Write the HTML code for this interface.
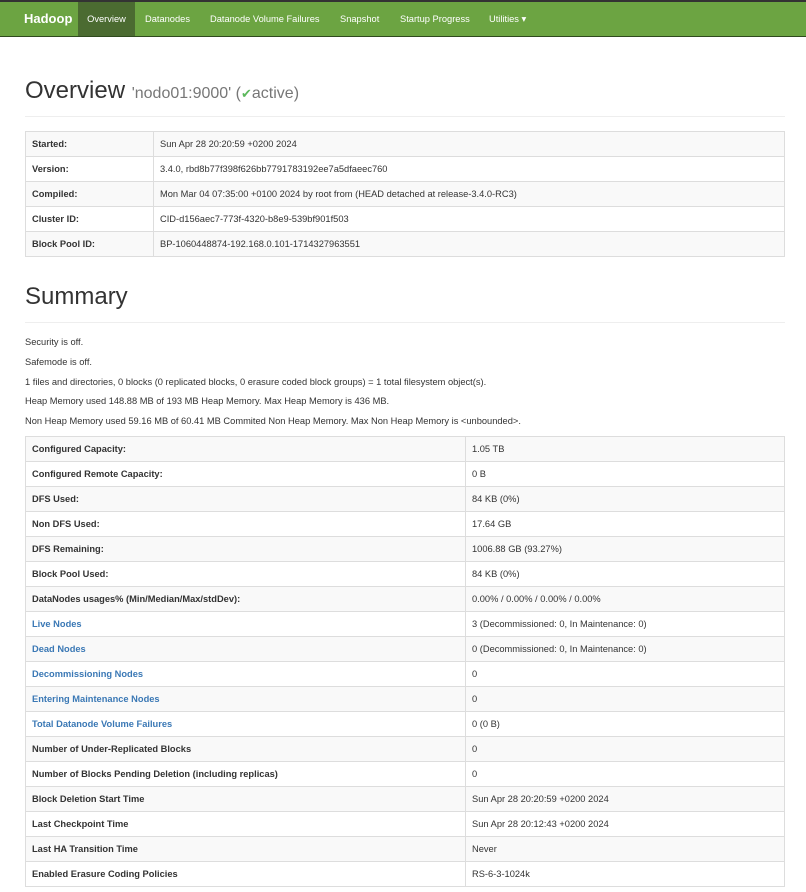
<!DOCTYPE html>
<html><head><meta charset="utf-8"><style>
*{box-sizing:border-box;margin:0;padding:0}
body{width:806px;height:892px;overflow:hidden;background:#fff;font-family:"Liberation Sans",Arial,sans-serif;font-size:9.3px;color:#333}
.nav{height:37px;background:#6ca442;border-top:2px solid #333;border-bottom:1px solid #2f4a1e;position:relative}
.nav span{position:absolute;top:0;height:34px;line-height:34px;color:#fff;font-size:9.3px}
.nav .brand{font-size:13px;left:24px}
.nav .act{background:#4b6b31;left:78px;width:57px;text-align:center}
h1{font-weight:normal;font-size:24px;color:#333;position:absolute;left:25px}
h1 small{font-size:16px;color:#777}
hr{position:absolute;left:25px;width:760px;border:0;border-top:1px solid #eee}
table{position:absolute;left:25px;width:760px;border-collapse:collapse}
td{border:1px solid #ddd;height:25px;padding:0 6px;font-size:9.3px;vertical-align:middle}
tr:nth-child(odd) td{background:#f9f9f9}
td.l{font-weight:bold}
td.a{color:#3a78b5;font-weight:bold}
.p{position:absolute;left:25px;font-size:9.3px}
</style></head><body>
<div class="nav">
<span class="brand" style="font-weight:bold">Hadoop</span>
<span class="act">Overview</span>
<span style="left:145px">Datanodes</span>
<span style="left:210px">Datanode Volume Failures</span>
<span style="left:340px">Snapshot</span>
<span style="left:400px">Startup Progress</span>
<span style="left:489px">Utilities ▾</span>
</div>
<h1 style="top:77px">Overview <small>'nodo01:9000' (<span style="color:#5cb85c;font-size:13px">✔</span>active)</small></h1>
<hr style="top:116px">
<table style="top:131px">
<tr><td class="l" style="width:128px">Started:</td><td>Sun Apr 28 20:20:59 +0200 2024</td></tr>
<tr><td class="l">Version:</td><td>3.4.0, rbd8b77f398f626bb7791783192ee7a5dfaeec760</td></tr>
<tr><td class="l">Compiled:</td><td>Mon Mar 04 07:35:00 +0100 2024 by root from (HEAD detached at release-3.4.0-RC3)</td></tr>
<tr><td class="l">Cluster ID:</td><td>CID-d156aec7-773f-4320-b8e9-539bf901f503</td></tr>
<tr><td class="l">Block Pool ID:</td><td>BP-1060448874-192.168.0.101-1714327963551</td></tr>
</table>
<h1 style="top:283px">Summary</h1>
<hr style="top:322px">
<div class="p" style="top:337px">Security is off.</div>
<div class="p" style="top:357px">Safemode is off.</div>
<div class="p" style="top:377px">1 files and directories, 0 blocks (0 replicated blocks, 0 erasure coded block groups) = 1 total filesystem object(s).</div>
<div class="p" style="top:396px">Heap Memory used 148.88 MB of 193 MB Heap Memory. Max Heap Memory is 436 MB.</div>
<div class="p" style="top:416px">Non Heap Memory used 59.16 MB of 60.41 MB Commited Non Heap Memory. Max Non Heap Memory is &lt;unbounded&gt;.</div>
<table style="top:436px">
<tr><td class="l" style="width:440px">Configured Capacity:</td><td>1.05 TB</td></tr>
<tr><td class="l">Configured Remote Capacity:</td><td>0 B</td></tr>
<tr><td class="l">DFS Used:</td><td>84 KB (0%)</td></tr>
<tr><td class="l">Non DFS Used:</td><td>17.64 GB</td></tr>
<tr><td class="l">DFS Remaining:</td><td>1006.88 GB (93.27%)</td></tr>
<tr><td class="l">Block Pool Used:</td><td>84 KB (0%)</td></tr>
<tr><td class="l">DataNodes usages% (Min/Median/Max/stdDev):</td><td>0.00% / 0.00% / 0.00% / 0.00%</td></tr>
<tr><td class="a">Live Nodes</td><td>3 (Decommissioned: 0, In Maintenance: 0)</td></tr>
<tr><td class="a">Dead Nodes</td><td>0 (Decommissioned: 0, In Maintenance: 0)</td></tr>
<tr><td class="a">Decommissioning Nodes</td><td>0</td></tr>
<tr><td class="a">Entering Maintenance Nodes</td><td>0</td></tr>
<tr><td class="a">Total Datanode Volume Failures</td><td>0 (0 B)</td></tr>
<tr><td class="l">Number of Under-Replicated Blocks</td><td>0</td></tr>
<tr><td class="l">Number of Blocks Pending Deletion (including replicas)</td><td>0</td></tr>
<tr><td class="l">Block Deletion Start Time</td><td>Sun Apr 28 20:20:59 +0200 2024</td></tr>
<tr><td class="l">Last Checkpoint Time</td><td>Sun Apr 28 20:12:43 +0200 2024</td></tr>
<tr><td class="l">Last HA Transition Time</td><td>Never</td></tr>
<tr><td class="l">Enabled Erasure Coding Policies</td><td>RS-6-3-1024k</td></tr>
</table>
</body></html>
